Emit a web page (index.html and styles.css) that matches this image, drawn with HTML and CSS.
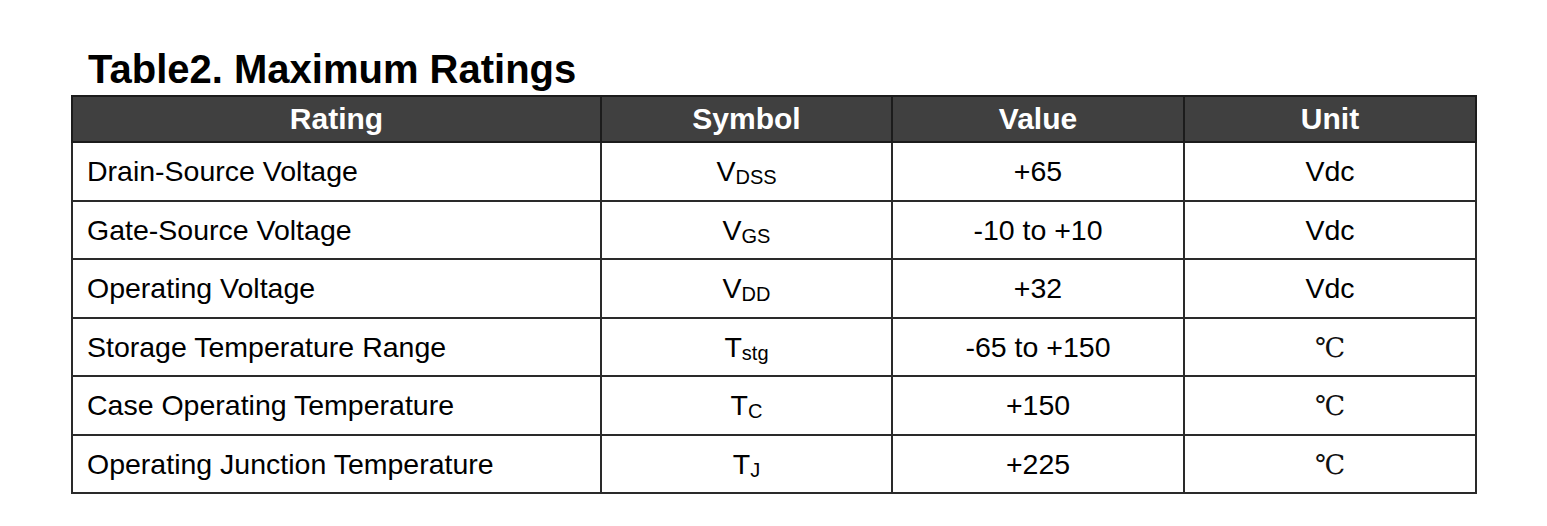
FILE: index.html
```html
<!DOCTYPE html>
<html>
<head>
<meta charset="utf-8">
<link rel="stylesheet" href="styles.css">
</head>
<body>
<div class="page">
  <h1 class="title">Table2. Maximum Ratings</h1>
  <table class="ratings">
    <colgroup>
      <col class="c1"><col class="c2"><col class="c3"><col class="c4">
    </colgroup>
    <thead>
      <tr><th>Rating</th><th>Symbol</th><th>Value</th><th>Unit</th></tr>
    </thead>
    <tbody>
      <tr><td class="name">Drain-Source Voltage</td><td>V<span class="sub">DSS</span></td><td>+65</td><td>Vdc</td></tr>
      <tr><td class="name">Gate-Source Voltage</td><td>V<span class="sub">GS</span></td><td>-10 to +10</td><td>Vdc</td></tr>
      <tr><td class="name">Operating Voltage</td><td>V<span class="sub">DD</span></td><td>+32</td><td>Vdc</td></tr>
      <tr><td class="name">Storage Temperature Range</td><td>T<span class="sub">stg</span></td><td>-65 to +150</td><td><span class="deg">℃</span></td></tr>
      <tr><td class="name">Case Operating Temperature</td><td>T<span class="sub">C</span></td><td>+150</td><td><span class="deg">℃</span></td></tr>
      <tr><td class="name">Operating Junction Temperature</td><td>T<span class="sub">J</span></td><td>+225</td><td><span class="deg">℃</span></td></tr>
    </tbody>
  </table>
</div>
</body>
</html>
```

FILE: styles.css
```css
html, body {
  margin: 0;
  padding: 0;
  background: #ffffff;
}

body {
  font-family: "Liberation Sans", Arial, sans-serif;
  color: #000;
}

.page {
  padding: 43px 0 0 71px;
}

.title {
  margin: 0 0 0 17px;
  font-size: 40px;
  font-weight: bold;
  line-height: 52px;
  height: 52px;
}

.ratings {
  border-collapse: collapse;
  table-layout: fixed;
  width: 1404px;
  border: 2px solid #1c1c1c;
}

.c1 { width: 529px; }
.c2 { width: 291px; }
.c3 { width: 292px; }
.c4 { width: 292px; }

.ratings th {
  background: #404040;
  color: #ffffff;
  font-size: 30px;
  font-weight: bold;
  height: 44px;
  padding: 0;
  border: 2px solid #1c1c1c;
  text-align: center;
  line-height: 1;
}

.ratings td {
  font-size: 28.5px;
  height: 56.5px;
  padding: 0;
  border: 2px solid #2a2a2a;
  text-align: center;
  line-height: 1;
}

.ratings td.name {
  text-align: left;
  padding-left: 14px;
}

.sub {
  font-size: 20px;
  position: relative;
  top: 3px;
}

.deg {
  font-family: "DejaVu Serif", "Liberation Serif", serif;
  font-size: 27px;
  font-weight: normal;
  color: #111;
}
```
